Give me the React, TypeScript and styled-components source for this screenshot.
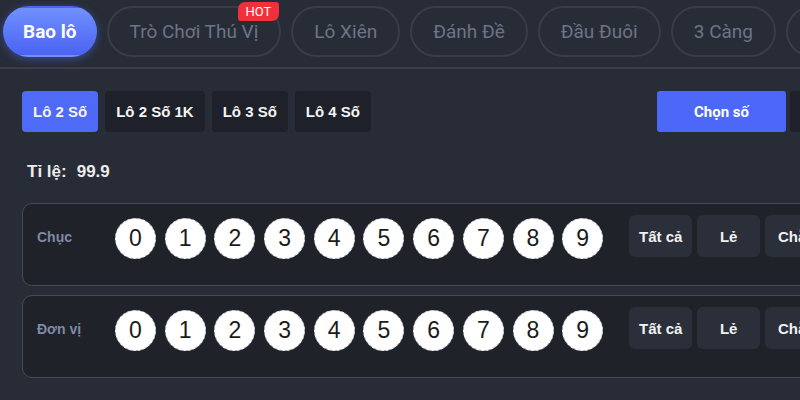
import React, { useState } from 'react';
import styled, { createGlobalStyle } from 'styled-components';

const GlobalStyle = createGlobalStyle`
  html, body {
    margin: 0;
    padding: 0;
    background: #282c37;
    overflow: hidden;
  }
`;

const Page = styled.div`
  width: 800px;
  height: 400px;
  overflow: hidden;
  background: #282c37;
  font-family: "Liberation Sans", Arial, sans-serif;
  color: #fff;
`;

const TabBar = styled.div`
  display: flex;
  gap: 10px;
  height: 69px;
  padding: 6px 0 0 3px;
  box-sizing: border-box;
  border-bottom: 2px solid #393d49;
  white-space: nowrap;
`;

const Tab = styled.div<{ $active?: boolean }>`
  position: relative;
  flex: none;
  height: 51px;
  box-sizing: border-box;
  padding: 0 ${p => (p.$active ? 18 : 21)}px;
  border-radius: 26px;
  display: flex;
  align-items: center;
  font-family: Roboto, "Liberation Sans", sans-serif;
  font-size: 19px;
  font-weight: ${p => (p.$active ? 700 : 400)};
  color: ${p => (p.$active ? '#ffffff' : '#6c7487')};
  background: ${p => (p.$active ? 'linear-gradient(180deg, #7090ff 0%, #4a63f2 100%)' : 'transparent')};
  border: 2px solid ${p => (p.$active ? 'transparent' : '#383d49')};
  box-shadow: ${p => (p.$active ? '0 2px 8px rgba(80, 110, 255, 0.45)' : 'none')};
`;

const Hot = styled.span`
  position: absolute;
  top: -6px;
  right: 0;
  background: #f2303b;
  color: #fff;
  font-family: Roboto, "Liberation Sans", sans-serif;
  font-size: 13px;
  font-weight: 400;
  line-height: 19px;
  padding: 0 8px;
  border-radius: 7px 3px 7px 3px;
`;

const Panel = styled.div`
  width: 897px;
  padding: 22px 0 0 22px;
`;

const SubRow = styled.div`
  display: flex;
  align-items: center;
`;

const SubGroup = styled.div`
  display: flex;
  gap: 7px;
`;

const RightGroup = styled.div`
  display: flex;
  gap: 4px;
  margin-left: auto;
`;

const SubTab = styled.div<{ $active?: boolean }>`
  flex: none;
  height: 41px;
  padding: 0 11px;
  display: flex;
  align-items: center;
  border-radius: 4px;
  font-size: 15px;
  font-weight: 700;
  color: #f4f4f4;
  background: ${p => (p.$active ? '#4f6af6' : '#1e2129')};
`;

const ModeButton = styled.div<{ $active?: boolean }>`
  flex: none;
  width: 129px;
  height: 41px;
  display: flex;
  align-items: center;
  justify-content: center;
  border-radius: 3px;
  font-family: Roboto, "Liberation Sans", sans-serif;
  font-size: 15px;
  font-weight: 700;
  color: #fff;
  background: ${p => (p.$active ? '#4d68f8' : '#1e2129')};
`;

const Ratio = styled.div`
  margin: 30px 0 0 5px;
  height: 18px;
  font-size: 17px;
  font-weight: 700;
  color: #ececec;
  display: flex;
  gap: 10px;
`;

const Cards = styled.div`
  margin-top: 23px;
  display: flex;
  flex-direction: column;
  gap: 9px;
`;

const Card = styled.div`
  height: 83px;
  box-sizing: border-box;
  border: 1px solid #454a56;
  border-radius: 10px;
  background: #1f2229;
  display: flex;
  align-items: flex-start;
  padding: 11px 0 0 14px;
`;

const Label = styled.div`
  flex: none;
  width: 78px;
  padding-top: 14px;
  font-size: 14px;
  font-weight: 700;
  color: #7f8aa6;
  white-space: nowrap;
`;

const Balls = styled.div`
  flex: none;
  display: flex;
  gap: 8.7px;
  padding-top: 3px;
`;

const Ball = styled.div<{ $picked?: boolean }>`
  flex: none;
  width: 41px;
  height: 41px;
  box-sizing: border-box;
  border-radius: 50%;
  border: 1px dashed #b9bcc4;
  background: ${p => (p.$picked ? '#4f6af6' : '#ffffff')};
  color: ${p => (p.$picked ? '#ffffff' : '#1b1b1b')};
  display: flex;
  align-items: center;
  justify-content: center;
  font-size: 23px;
  cursor: pointer;
`;

const Actions = styled.div`
  flex: none;
  display: flex;
  gap: 5px;
  margin-left: 26px;
`;

const Action = styled.div`
  flex: none;
  width: 63px;
  height: 42px;
  border-radius: 6px;
  background: #2b2f39;
  display: flex;
  align-items: center;
  justify-content: center;
  font-size: 15px;
  font-weight: 700;
  color: #f2f2f2;
`;

const tabs = ['Bao lô', 'Trò Chơi Thú Vị', 'Lô Xiên', 'Đánh Đề', 'Đầu Đuôi', '3 Càng', 'Lô Trượt'];
const subTabs = ['Lô 2 Số', 'Lô 2 Số 1K', 'Lô 3 Số', 'Lô 4 Số'];
const rows = ['Chục', 'Đơn vị'];
const digits = [0, 1, 2, 3, 4, 5, 6, 7, 8, 9];
const actions = ['Tất cả', 'Lẻ', 'Chẵn', 'Tài', 'Xỉu'];

function App() {
  const [picked, setPicked] = useState<Record<string, boolean>>({});

  const toggle = (key: string) => setPicked(prev => ({ ...prev, [key]: !prev[key] }));

  return (
    <Page>
      <GlobalStyle />
      <TabBar>
        {tabs.map((t, i) => (
          <Tab key={t} $active={i === 0}>
            {t}
            {i === 1 && <Hot>HOT</Hot>}
          </Tab>
        ))}
      </TabBar>
      <Panel>
        <SubRow>
          <SubGroup>
            {subTabs.map((s, i) => (
              <SubTab key={s} $active={i === 0}>{s}</SubTab>
            ))}
          </SubGroup>
          <RightGroup>
            <ModeButton $active>Chọn số</ModeButton>
            <ModeButton>Nhập số</ModeButton>
          </RightGroup>
        </SubRow>
        <Ratio>
          <span>Tỉ lệ:</span>
          <span>99.9</span>
        </Ratio>
        <Cards>
          {rows.map(r => (
            <Card key={r}>
              <Label>{r}</Label>
              <Balls>
                {digits.map(d => (
                  <Ball key={d} $picked={picked[r + d]} onClick={() => toggle(r + d)}>
                    {d}
                  </Ball>
                ))}
              </Balls>
              <Actions>
                {actions.map(a => (
                  <Action key={a}>{a}</Action>
                ))}
              </Actions>
            </Card>
          ))}
        </Cards>
      </Panel>
    </Page>
  );
}

export default App;
